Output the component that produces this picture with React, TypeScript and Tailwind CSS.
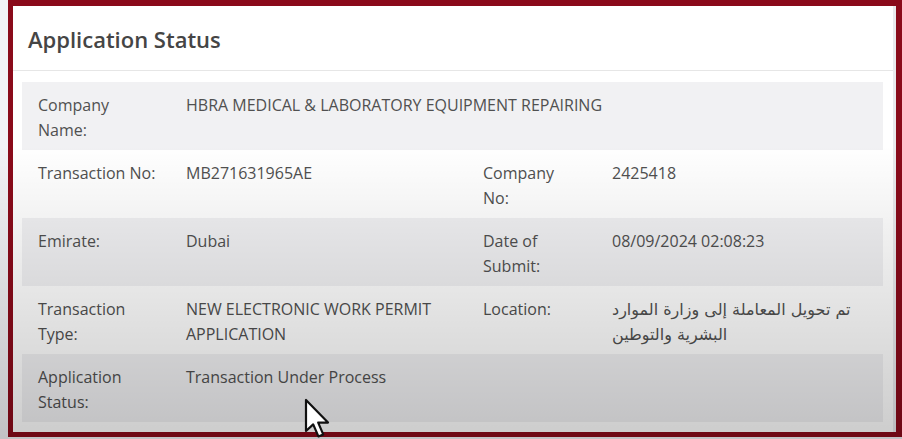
import React from "react";

type Field = { label: string; value: React.ReactNode };
type Row = { left: Field; right?: Field; wide?: boolean };

const rows: Row[] = [
  {
    left: { label: "Company Name:", value: "HBRA MEDICAL & LABORATORY EQUIPMENT REPAIRING" },
    wide: true,
  },
  {
    left: { label: "Transaction No:", value: "MB271631965AE" },
    right: { label: "Company No:", value: "2425418" },
  },
  {
    left: { label: "Emirate:", value: "Dubai" },
    right: { label: "Date of Submit:", value: "08/09/2024 02:08:23" },
  },
  {
    left: { label: "Transaction Type:", value: "NEW ELECTRONIC WORK PERMIT APPLICATION" },
    right: {
      label: "Location:",
      value: (
        <span style={{ fontFamily: '"DejaVu Sans", "Noto Sans", sans-serif' }} className="text-[16px]">
          تم تحويل المعاملة إلى وزارة الموارد
          <br />
          البشرية والتوطين
        </span>
      ),
    },
  },
  {
    left: { label: "Application Status:", value: "Transaction Under Process" },
    wide: true,
  },
];

function Cursor() {
  return (
    <svg
      className="absolute left-[304px] top-[398px] pointer-events-none"
      width="28"
      height="41"
      viewBox="0 0 14 20.5"
    >
      <path
        d="M1 1 L1 16.5 L4.6 13.2 L7.2 19.2 L9.6 18.2 L7.1 12.3 L12 12.3 Z"
        fill="white"
        stroke="#111"
        strokeWidth="1.1"
        strokeLinejoin="round"
      />
    </svg>
  );
}

export default function App() {
  return (
    <div
      className="relative w-[902px] h-[439px] bg-[#f2f2f6] pl-[8px] pb-[2px] overflow-hidden text-[#505050]"
      style={{ fontFamily: '"Open Sans", "Noto Sans", sans-serif' }}
    >
      <div className="h-full border-[#8a0a1a] border-t-[6px] border-l-[5px] border-r-[6px] border-b-[5px] bg-[#e9e9ec] pr-[3px]">
        <div className="h-full bg-white flex flex-col">
          <div className="h-[65px] border-b border-[#e6e6e6] pl-[15px] flex items-center">
            <h1 className="text-[22px] font-semibold text-[#454545] pt-[2px]">Application Status</h1>
          </div>
          <div className="pl-[9px] pr-[10px] pt-[11px]">
            {rows.map((r, i) => (
              <div
                key={i}
                className={`grid grid-cols-[148px_297px_129px_1fr] h-[68px] pl-[16px] pt-[11px] text-[16px] leading-[25px] ${
                  i % 2 === 0 ? "bg-[#f1f1f3]" : "bg-white"
                }`}
              >
                <div className="w-[120px]">{r.left.label}</div>
                <div className={r.wide ? "col-span-3 whitespace-nowrap" : "pr-4"}>{r.left.value}</div>
                {r.right && (
                  <>
                    <div className="w-[96px]">{r.right.label}</div>
                    <div>{r.right.value}</div>
                  </>
                )}
              </div>
            ))}
          </div>
        </div>
      </div>
      <div className="absolute inset-0 pointer-events-none bg-[linear-gradient(to_bottom,transparent_33%,rgba(0,0,0,0.2)_100%)]" />
      <Cursor />
    </div>
  );
}
